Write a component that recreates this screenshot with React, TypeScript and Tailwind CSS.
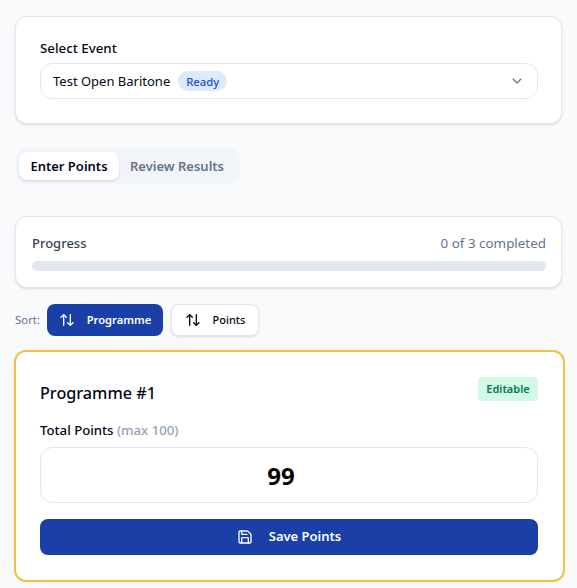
import { ArrowUpDown, ChevronDown, Save } from "lucide-react";

export default function App() {
  return (
    <div className="h-[588px] overflow-hidden bg-[#f9fafc] px-[15px] pt-4 font-['Noto_Sans',sans-serif] text-[#020817]">
      <div className="flex h-[108px] w-[547px] flex-col rounded-xl border border-[#e2e8f0] bg-white pt-[23px] pr-[23px] pl-6 shadow-[0_1px_3px_rgba(0,0,0,0.1),0_1px_2px_-1px_rgba(0,0,0,0.1)]">
        <div className="text-[13.3px] leading-4 font-medium">Select Event</div>
        <div className="mt-[7px] flex h-9 items-center justify-between rounded-xl border border-[#e2e8f0] bg-white px-3">
          <div className="flex items-center gap-2">
            <span className="text-[13px] leading-5">Test Open Baritone</span>
            <span className="rounded-full bg-[#dbeafe] px-2 pt-[3px] pb-px text-[11.3px] leading-4 font-medium text-[#1d4ed8]">Ready</span>
          </div>
          <ChevronDown className="h-4 w-4 text-[#6b7280]" strokeWidth={1.75} />
        </div>
      </div>

      <div className="mt-6 ml-px flex h-9 w-[224px] items-center rounded-xl bg-[#f1f5f9] px-[3px]">
        <div className="flex h-7 w-[100px] items-center justify-center rounded-lg bg-white pt-px text-[13px] font-semibold shadow-sm">Enter Points</div>
        <div className="flex h-7 w-[116px] items-center justify-center pt-px text-[13px] font-semibold text-[#64748b]">Review Results</div>
      </div>

      <div className="mt-8 h-[72px] w-[547px] rounded-xl border border-[#e2e8f0] bg-white pt-4 pr-[15px] pl-4 shadow-[0_1px_3px_rgba(0,0,0,0.1),0_1px_2px_-1px_rgba(0,0,0,0.1)]">
        <div className="flex items-center justify-between text-[13px] leading-5">
          <span className="font-medium text-[#334155]">Progress</span>
          <span className="text-[13.4px] text-[#64748b]">0 of 3 completed</span>
        </div>
        <div className="mt-2 h-2.5 rounded-full bg-[#e2e8f0]" />
      </div>

      <div className="mt-4 flex items-center">
        <span className="w-8 text-[11.4px] text-[#64748b]">Sort:</span>
        <div className="flex h-8 w-[116px] items-center justify-center gap-3 rounded-lg bg-[#1a40a8] text-[11.2px] font-semibold text-white">
          <ArrowUpDown className="h-4 w-4" />
          <span>Programme</span>
        </div>
        <div className="ml-2 flex h-8 w-[88px] items-center justify-center gap-3 rounded-lg border border-[#e2e8f0] bg-white text-[11px] font-medium shadow-sm">
          <ArrowUpDown className="h-4 w-4" />
          <span>Points</span>
        </div>
      </div>

      <div className="mt-3.5 -ml-px h-[232px] w-[551px] rounded-xl border-2 border-[#f4c042] bg-white pt-6 pr-[25px] pl-6">
        <div className="flex items-start justify-between pt-[1px]">
          <h2 className="pt-1 text-[16.2px] leading-6 font-medium">Programme #1</h2>
          <span className="flex h-6 w-[60px] items-center justify-center rounded bg-[#d1fae5] text-[11px] font-semibold text-[#047857]">Editable</span>
        </div>
        <div className="mt-[17px] text-[13.2px] leading-4 font-medium">
          Total Points <span className="text-[#94a3b8]">(max 100)</span>
        </div>
        <div className="mt-[9px] flex h-14 items-center justify-center rounded-xl border border-[#e2e8f0] bg-white pt-px pr-4 text-2xl font-bold text-black">99</div>
        <div className="mt-4 flex h-9 items-center justify-center gap-4 rounded-lg bg-[#1a40a8] text-[13px] font-semibold text-white">
          <Save className="h-4 w-4" />
          <span>Save Points</span>
        </div>
      </div>
    </div>
  );
}
